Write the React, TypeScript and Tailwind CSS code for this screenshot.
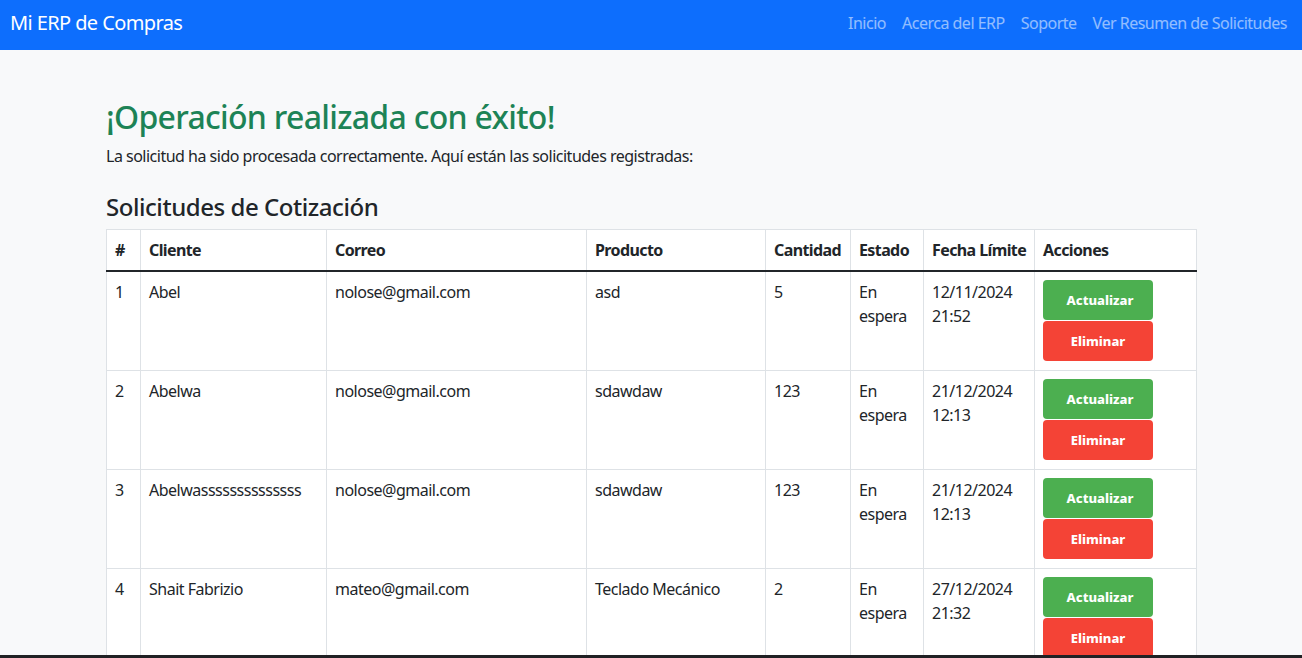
import React from "react";

type Solicitud = {
  id: number;
  cliente: string;
  correo: string;
  producto: string;
  cantidad: number;
  estado: string;
  fecha: string;
  hora: string;
};

const solicitudes: Solicitud[] = [
  { id: 1, cliente: "Abel", correo: "nolose@gmail.com", producto: "asd", cantidad: 5, estado: "En espera", fecha: "12/11/2024", hora: "21:52" },
  { id: 2, cliente: "Abelwa", correo: "nolose@gmail.com", producto: "sdawdaw", cantidad: 123, estado: "En espera", fecha: "21/12/2024", hora: "12:13" },
  { id: 3, cliente: "Abelwassssssssssssss", correo: "nolose@gmail.com", producto: "sdawdaw", cantidad: 123, estado: "En espera", fecha: "21/12/2024", hora: "12:13" },
  { id: 4, cliente: "Shait Fabrizio", correo: "mateo@gmail.com", producto: "Teclado Mecánico", cantidad: 2, estado: "En espera", fecha: "27/12/2024", hora: "21:32" },
];

const font = "font-['Segoe_UI','Noto_Sans','Open_Sans',sans-serif]";

function Navbar() {
  return (
    <nav className="flex h-[50px] items-center justify-between bg-[#0d6efd] pr-[7px] pb-[5px] pl-[10px]">
      <a href="#" className="text-[20px] leading-[30px] tracking-[-0.6px] text-white">
        Mi ERP de Compras
      </a>
      <div className="flex items-center text-[16px] leading-6 text-white/55">
        <a href="#" className="px-2">Inicio</a>
        <a href="#" className="px-2">Acerca del ERP</a>
        <a href="#" className="px-2">Soporte</a>
        <a href="#" className="px-2">Ver Resumen de Solicitudes</a>
      </div>
    </nav>
  );
}

function Acciones() {
  return (
    <div className="flex w-[110px] flex-col gap-px tracking-normal">
      <button className="h-10 rounded bg-[#4caf50] pl-1 text-[13px] font-extrabold text-white">
        Actualizar
      </button>
      <button className="h-10 rounded bg-[#f44336] text-[13px] font-extrabold text-white">
        Eliminar
      </button>
    </div>
  );
}

export default function App() {
  const th = "border border-[#dee2e6] px-2 py-2 text-left font-bold whitespace-nowrap tracking-[-0.6px]";
  const td = "border border-[#dee2e6] px-2 pt-2 pb-[9px] align-top";

  return (
    <div className={`${font} min-h-[658px] bg-[#f8f9fa] tracking-[-0.5px] text-[#212529]`}>
      <Navbar />
      <main className="ml-[106px] w-[1091px] pt-12">
        <h1 className="mb-2 text-[32px] leading-[38px] font-medium tracking-[-0.7px] text-[#1d8356]">
          ¡Operación realizada con éxito!
        </h1>
        <p className="text-[16px] leading-6">
          La solicitud ha sido procesada correctamente. Aquí están las solicitudes registradas:
        </p>
        <h3 className="mt-6 mb-2 text-[24px] leading-[29px] font-medium tracking-[-0.45px]">
          Solicitudes de Cotización
        </h3>
        <table className="w-full table-fixed border-collapse bg-white text-[16px] leading-6">
          <thead>
            <tr className="border-b-2 border-b-[#212529]">
              <th className={`${th} w-[34px]`}>#</th>
              <th className={`${th} w-[186px]`}>Cliente</th>
              <th className={`${th} w-[260px]`}>Correo</th>
              <th className={`${th} w-[179px]`}>Producto</th>
              <th className={`${th} w-[85px]`}>Cantidad</th>
              <th className={`${th} w-[73px]`}>Estado</th>
              <th className={`${th} w-[111px]`}>Fecha Límite</th>
              <th className={th}>Acciones</th>
            </tr>
          </thead>
          <tbody>
            {solicitudes.map((s) => (
              <tr key={s.id}>
                <td className={td}>{s.id}</td>
                <td className={td}>{s.cliente}</td>
                <td className={td}>{s.correo}</td>
                <td className={td}>{s.producto}</td>
                <td className={td}>{s.cantidad}</td>
                <td className={td}>{s.estado}</td>
                <td className={td}>
                  {s.fecha}
                  <br />
                  {s.hora}
                </td>
                <td className={td}>
                  <Acciones />
                </td>
              </tr>
            ))}
          </tbody>
        </table>
      </main>
      <div className="fixed right-0 bottom-0 left-0 h-[3px] bg-[#202124]" />
    </div>
  );
}
